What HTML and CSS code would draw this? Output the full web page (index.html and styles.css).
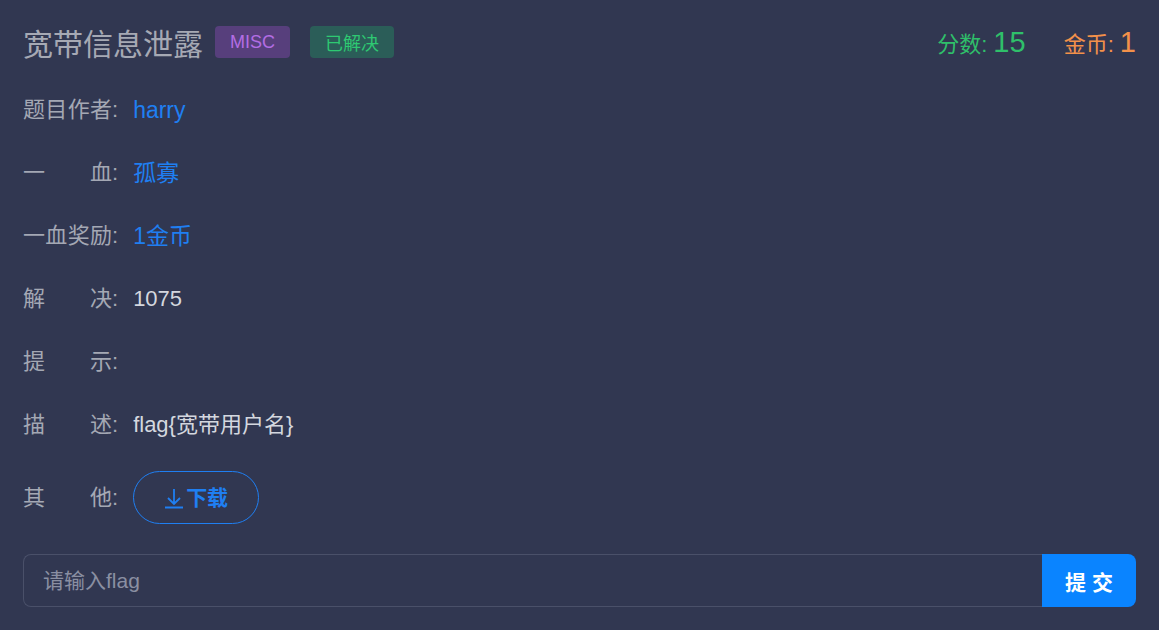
FILE: index.html
```html
<!DOCTYPE html>
<html lang="zh-CN">
  <head>
    <meta charset="UTF-8" />
    <meta name="viewport" content="width=device-width, initial-scale=1.0" />
    <title>宽带信息泄露</title>
    <link rel="stylesheet" href="styles.css">
  </head>
  <body>
    <div class="challenge">
      <div class="header">
        <h2 class="title">宽带信息泄露</h2>
        <span class="tag tag-misc">MISC</span>
        <span class="tag tag-solved">已解决</span>
        <div class="stats">
          <span class="score">分数: <b>15</b></span>
          <span class="coin">金币: <b>1</b></span>
        </div>
      </div>

      <div class="row">
        <span class="label"><span class="chars">题目作者</span>:</span>
        <a class="link" href="#">harry</a>
      </div>
      <div class="row">
        <span class="label"><span class="chars">一血</span>:</span>
        <a class="link" href="#">孤寡</a>
      </div>
      <div class="row">
        <span class="label"><span class="chars">一血奖励</span>:</span>
        <span class="link">1金币</span>
      </div>
      <div class="row">
        <span class="label"><span class="chars">解决</span>:</span>
        <span class="value">1075</span>
      </div>
      <div class="row">
        <span class="label"><span class="chars">提示</span>:</span>
        <span class="value"></span>
      </div>
      <div class="row">
        <span class="label"><span class="chars">描述</span>:</span>
        <span class="value">flag{宽带用户名}</span>
      </div>
      <div class="row row-other">
        <span class="label"><span class="chars">其他</span>:</span>
        <a class="download" href="#">
          <svg width="20" height="22" viewBox="0 0 20 22" fill="none" stroke="currentColor" stroke-width="1.8">
            <path d="M10 2v15M4 11l6 6 6-6M1 20.5h18" />
          </svg>
          下载
        </a>
      </div>

      <form class="flag-form">
        <input type="text" placeholder="请输入flag" />
        <button type="submit">提 交</button>
      </form>
    </div>
  </body>
</html>
```

FILE: styles.css
```css
body {
  font-family: "Liberation Sans", "Noto Sans CJK SC", sans-serif;
  background-color: #313751;
  margin: 0;
  padding: 0;
}
.challenge {
  padding: 26px 23px 0 23px;
}
.header {
  display: flex;
  align-items: center;
  height: 32px;
  margin-bottom: 20px;
}
.title {
  margin: 0 12px 0 0;
  font-size: 30px;
  font-weight: normal;
  color: #a6a9b4;
}
.tag {
  display: inline-flex;
  align-items: center;
  height: 32px;
  padding: 0 15px;
  border-radius: 4px;
  font-size: 18px;
  box-sizing: border-box;
}
.tag-misc {
  background-color: #573f7c;
  color: #b36de4;
  margin-right: 20px;
}
.tag-solved {
  background-color: #2b5d58;
  color: #2ec972;
}
.stats {
  margin-left: auto;
  display: flex;
  align-items: baseline;
  gap: 38px;
  font-size: 22px;
}
.stats b {
  font-weight: normal;
  font-size: 29px;
}
.score {
  color: #2fbf6a;
}
.coin {
  color: #f3914a;
}
.row {
  display: flex;
  align-items: center;
  height: 63px;
  font-size: 22px;
  line-height: 30px;
}
.label {
  display: inline-block;
  white-space: nowrap;
  color: #a4a8b4;
  margin-right: 15px;
}
.chars {
  display: inline-block;
  width: 89px;
  text-align: justify;
  text-align-last: justify;
  vertical-align: bottom;
}
.link {
  color: #1f7ff2;
  font-size: 23px;
  text-decoration: none;
}
.value {
  color: #d4d7df;
}
.row-other {
  height: 53px;
  padding: 15px 0 30px 0;
}
.download {
  display: inline-flex;
  align-items: center;
  justify-content: center;
  gap: 2px;
  width: 126px;
  height: 53px;
  box-sizing: border-box;
  border: 1px solid #1f7ff2;
  border-radius: 27px;
  color: #1f7ff2;
  font-weight: bold;
  font-size: 21px;
  text-decoration: none;
}
.flag-form {
  display: flex;
  height: 53px;
}
.flag-form input {
  flex: 1;
  min-width: 0;
  background-color: transparent;
  border: 1px solid #4a5069;
  border-right: none;
  border-radius: 8px 0 0 8px;
  padding: 0 19px;
  font-family: inherit;
  font-size: 21px;
  color: #d4d7df;
  outline: none;
}
.flag-form input::placeholder {
  color: #8a8fa2;
}
.flag-form button {
  width: 94px;
  background-color: #0a84ff;
  color: white;
  border: none;
  border-radius: 0 8px 8px 0;
  font-family: inherit;
  font-size: 21px;
  font-weight: bold;
  cursor: pointer;
}
```
